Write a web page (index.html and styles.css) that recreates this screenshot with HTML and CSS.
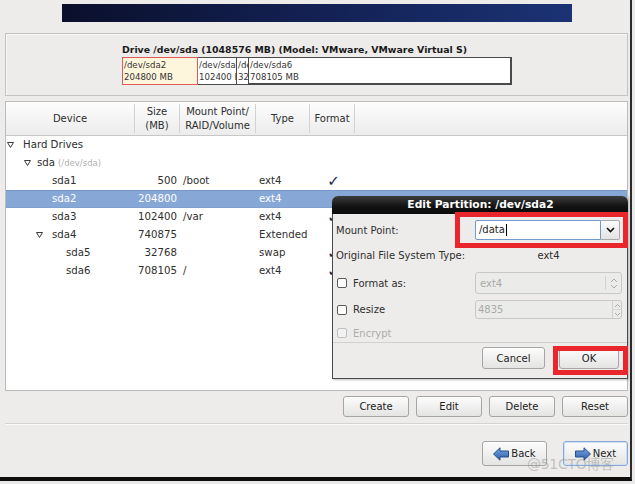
FILE: index.html
```html
<!DOCTYPE html>
<html>
<head>
<meta charset="utf-8">
<link rel="stylesheet" href="styles.css">
</head>
<body>
<div class="window">
  <div class="banner"></div>

  <section class="drive">
    <div class="drive-inner">
      <div class="drive-title">Drive /dev/sda (1048576 MB) (Model: VMware, VMware Virtual S)</div>
      <div class="drive-bar">
        <div class="seg seg-sel seg-a">/dev/sda2<br>204800 MB</div>
        <div class="seg seg-b">/dev/sda3<br>102400 MB</div>
        <div class="seg seg-c">/dev/sda5<br>32768 MB</div>
        <div class="seg seg-d">/dev/sda6<br>708105 MB</div>
      </div>
    </div>
  </section>

  <section class="tree">
    <div class="thead">
      <div class="th">Device</div>
      <div class="th th2">Size<br>(MB)</div>
      <div class="th th2">Mount Point/<br>RAID/Volume</div>
      <div class="th">Type</div>
      <div class="th">Format</div>
      <div class="th th-fill"></div>
    </div>

    <div class="row">
      <div class="cell dev d-hd"><span class="exp exp-hd"><svg width="7" height="6" viewBox="0 0 7 6"><polygon points="0.5,0.5 6.5,0.5 3.5,5.5" fill="#fff" stroke="#3a3a3a" stroke-width="1"/></svg></span>Hard Drives</div>
      <div class="cell"></div><div class="cell"></div><div class="cell"></div><div class="cell"></div><div class="cell"></div>
    </div>
    <div class="row">
      <div class="cell dev d-sda"><span class="exp exp-sda"><svg width="7" height="6" viewBox="0 0 7 6"><polygon points="0.5,0.5 6.5,0.5 3.5,5.5" fill="#fff" stroke="#3a3a3a" stroke-width="1"/></svg></span>sda <span class="dim">(/dev/sda)</span></div>
      <div class="cell"></div><div class="cell"></div><div class="cell"></div><div class="cell"></div><div class="cell"></div>
    </div>
    <div class="row">
      <div class="cell dev d-part">sda1</div>
      <div class="cell size">500</div>
      <div class="cell mnt">/boot</div>
      <div class="cell type">ext4</div>
      <div class="cell fmt">✓</div>
      <div class="cell"></div>
    </div>
    <div class="row row-sel">
      <div class="cell dev d-part">sda2</div>
      <div class="cell size">204800</div>
      <div class="cell mnt"></div>
      <div class="cell type">ext4</div>
      <div class="cell fmt"></div>
      <div class="cell"></div>
    </div>
    <div class="row">
      <div class="cell dev d-part">sda3</div>
      <div class="cell size">102400</div>
      <div class="cell mnt">/var</div>
      <div class="cell type">ext4</div>
      <div class="cell fmt">✓</div>
      <div class="cell"></div>
    </div>
    <div class="row">
      <div class="cell dev d-ext"><span class="exp exp-ext"><svg width="7" height="6" viewBox="0 0 7 6"><polygon points="0.5,0.5 6.5,0.5 3.5,5.5" fill="#fff" stroke="#3a3a3a" stroke-width="1"/></svg></span>sda4</div>
      <div class="cell size">740875</div>
      <div class="cell mnt"></div>
      <div class="cell type">Extended</div>
      <div class="cell fmt"></div>
      <div class="cell"></div>
    </div>
    <div class="row">
      <div class="cell dev d-log">sda5</div>
      <div class="cell size">32768</div>
      <div class="cell mnt"></div>
      <div class="cell type">swap</div>
      <div class="cell fmt">✓</div>
      <div class="cell"></div>
    </div>
    <div class="row">
      <div class="cell dev d-log">sda6</div>
      <div class="cell size">708105</div>
      <div class="cell mnt">/</div>
      <div class="cell type">ext4</div>
      <div class="cell fmt">✓</div>
      <div class="cell"></div>
    </div>
  </section>

  <div class="actions">
    <button class="btn">Create</button>
    <button class="btn">Edit</button>
    <button class="btn">Delete</button>
    <button class="btn">Reset</button>
  </div>

  <div class="sep"></div>

  <div class="nav">
    <button class="btn btn-nav"><svg class="arrow" width="16" height="14" viewBox="0 0 16 14"><defs><linearGradient id="ga" x1="0" y1="0" x2="0" y2="1"><stop offset="0" stop-color="#7aa6e0"/><stop offset="1" stop-color="#2c5ea8"/></linearGradient></defs><path d="M0.5 7 L7 0.8 L7 4 L15.5 4 L15.5 10 L7 10 L7 13.2 Z" fill="url(#ga)" stroke="#25508e" stroke-width="1" stroke-linejoin="round"/></svg>Back</button>
    <button class="btn btn-nav btn-focus"><svg class="arrow" width="16" height="14" viewBox="0 0 16 14"><defs><linearGradient id="gb" x1="0" y1="0" x2="0" y2="1"><stop offset="0" stop-color="#7aa6e0"/><stop offset="1" stop-color="#2c5ea8"/></linearGradient></defs><path d="M15.5 7 L9 0.8 L9 4 L0.5 4 L0.5 10 L9 10 L9 13.2 Z" fill="url(#gb)" stroke="#25508e" stroke-width="1" stroke-linejoin="round"/></svg>Next</button>
  </div>

  <div class="dialog">
    <div class="dlg-title">Edit Partition: /dev/sda2</div>
    <div class="dlg-body">
      <div class="frow r-mount">
        <span class="lbl">Mount Point:</span>
        <div class="combo-entry">
          <div class="entry-text">/data<span class="caret"></span></div>
          <div class="combo-btn"><svg width="9" height="6" viewBox="0 0 9 6"><polyline points="1,1 4.5,4.5 8,1" fill="none" stroke="#111" stroke-width="1.6"/></svg></div>
        </div>
      </div>
      <div class="frow r-orig">
        <span class="lbl">Original File System Type:</span>
        <span class="val">ext4</span>
      </div>
      <div class="frow r-fmt">
        <span class="lbl chk-lbl"><span class="chk"></span>Format as:</span>
        <div class="combo-dis">
          <span class="dis-text">ext4</span>
          <span class="combo-arrows"><svg width="8" height="13" viewBox="0 0 8 13"><polyline points="1,5 4,2 7,5" fill="none" stroke="#aaa" stroke-width="1"/><polyline points="1,8 4,11 7,8" fill="none" stroke="#aaa" stroke-width="1"/></svg></span>
        </div>
      </div>
      <div class="frow r-resize">
        <span class="lbl chk-lbl"><span class="chk"></span>Resize</span>
        <div class="spin">
          <span class="dis-text">4835</span>
          <span class="spin-btns">
            <span class="spin-b"><svg width="7" height="5" viewBox="0 0 7 5"><polyline points="1,4 3.5,1.5 6,4" fill="none" stroke="#aaa" stroke-width="1"/></svg></span>
            <span class="spin-b"><svg width="7" height="5" viewBox="0 0 7 5"><polyline points="1,1 3.5,3.5 6,1" fill="none" stroke="#aaa" stroke-width="1"/></svg></span>
          </span>
        </div>
      </div>
      <div class="frow r-enc">
        <span class="lbl chk-lbl lbl-dis"><span class="chk chk-dis"></span>Encrypt</span>
      </div>
      <div class="dlg-sep"></div>
      <div class="dlg-btns">
        <button class="btn btn-cancel">Cancel</button>
        <button class="btn btn-ok">OK</button>
      </div>
    </div>
  </div>

  <div class="mark mark-mount"></div>
  <div class="mark mark-ok"></div>
  <div class="watermark">@51CTO博客</div>
</div>
</body>
</html>
```

FILE: styles.css
```css
* { box-sizing: border-box; }

html, body {
  margin: 0;
  padding: 0;
}

body {
  width: 635px;
  height: 484px;
  overflow: hidden;
  background: #e9e9e9;
  font-family: "DejaVu Sans", sans-serif;
  font-size: 10px;
  color: #2e2e2e;
}

.window {
  position: relative;
  width: 632px;
  height: 481px;
  background: #edeceb;
  border-right: 2px solid #2b2b2b;
  border-bottom: 4px solid #0d0d0d;
  padding: 4px 2px 0 5px;
  display: flex;
  flex-direction: column;
}

.banner {
  margin-left: 57px;
  width: 510px;
  height: 18px;
  background: linear-gradient(90deg, #0a0f2b 0%, #121f50 45%, #1b3274 100%);
  flex: none;
}

/* drive box */
.drive {
  margin-top: 11px;
  height: 63px;
  border: 1px solid #c3c3c1;
  box-shadow: inset 1px 1px 0 #f8f8f8;
  display: flex;
  justify-content: center;
  flex: none;
}

.drive-inner {
  width: 390px;
  padding-top: 9px;
  margin-left: 1px;
}

.drive-title {
  font-weight: bold;
  font-size: 9.4px;
  line-height: 13px;
  color: #1a1a1a;
  white-space: nowrap;
  margin-bottom: 1px;
}

.drive-bar {
  display: flex;
  height: 28px;
}

.seg {
  height: 28px;
  border: 1px solid #4a4a4a;
  border-left: none;
  background: #fff;
  font-size: 8.6px;
  line-height: 12px;
  padding: 1px 0 0 1px;
  overflow: hidden;
  white-space: nowrap;
  color: #333;
}

.seg-a { width: 76px; }
.seg-b { width: 39px; }
.seg-c { width: 12px; }
.seg-d { width: 263px; border-right: 2px solid #4a4a4a; border-bottom: 2px solid #4a4a4a; }

.seg-sel {
  background: #fdf6dd;
  border: 1px solid #e05a5a;
}

/* tree */
.tree {
  margin-top: 5px;
  height: 290px;
  background: #fff;
  border: 1px solid #bcbcbc;
  flex: none;
}

.thead, .row {
  display: grid;
  grid-template-columns: 129px 45px 76px 54px 45px 1fr;
}

.thead {
  height: 34px;
  background: linear-gradient(#fdfdfd, #ececec);
  border-bottom: 1px solid #c7c7c7;
}

.th {
  display: flex;
  align-items: center;
  justify-content: center;
  text-align: center;
  line-height: 14px;
  color: #2e2e2e;
  border-right: 1px solid #d2d2d2;
  margin: 2px 0;
}

.th2 { padding-top: 1px; }

.th-fill { border-right: none; }

.row {
  height: 18px;
  line-height: 18px;
  white-space: nowrap;
  font-size: 10.2px;
}

.row-sel {
  background: #87a7d7;
  color: #fff;
  box-shadow: inset 0 1px 0 #7797c9, inset 0 -1px 0 #7f9fd0;
}

.cell { overflow: hidden; }

.dev { display: flex; align-items: center; }

.exp {
  display: inline-flex;
  align-items: center;
  height: 18px;
  flex: none;
}

.exp svg { display: block; }

.d-hd { padding-left: 1px; }
.exp-hd { width: 16px; }

.d-sda { padding-left: 18px; }
.exp-sda { width: 13px; }

.d-ext { padding-left: 30px; }
.exp-ext { width: 16px; }

.d-part { padding-left: 46px; }
.d-log { padding-left: 60px; }

.dim {
  font-size: 8.5px;
  color: #b0b0b0;
  margin-left: 3px;
}

.size { text-align: right; padding-right: 3px; }
.mnt { padding-left: 3px; }
.type { padding-left: 3px; }

.fmt {
  text-align: center;
  font-size: 15px;
  color: #1d1d4c;
  padding-left: 2px;
}

/* action buttons */
.btn {
  font-family: "DejaVu Sans", sans-serif;
  font-size: 10px;
  color: #222;
  background: linear-gradient(#fcfcfc, #e4e4e3);
  border: 1px solid #a5a5a5;
  border-radius: 3px;
  box-shadow: inset 0 1px 0 #fff;
  padding: 0;
  margin: 0;
  display: inline-flex;
  align-items: center;
  justify-content: center;
}

.actions {
  margin-top: 5px;
  height: 21px;
  display: flex;
  justify-content: flex-end;
  gap: 7px;
  flex: none;
}

.actions .btn { width: 66px; height: 21px; }

.sep {
  margin-top: 6px;
  height: 2px;
  border-top: 1px solid #d3d3d1;
  border-bottom: 1px solid #fafafa;
  flex: none;
}

.nav {
  margin-top: 16px;
  height: 25px;
  display: flex;
  justify-content: flex-end;
  gap: 16px;
  flex: none;
}

.btn-nav {
  width: 65px;
  height: 25px;
  gap: 2px;
}

.btn-focus {
  border-color: #86a9d8;
  box-shadow: inset 0 0 0 1px #cfe0f5;
}

.arrow { display: block; }

/* dialog */
.dialog {
  position: absolute;
  left: 332px;
  top: 196px;
  width: 296px;
  height: 183px;
  display: flex;
  flex-direction: column;
  box-shadow: 1px 1px 2px rgba(0,0,0,0.25);
}

.dlg-title {
  height: 18px;
  line-height: 18px;
  background: linear-gradient(#3c3c3c, #111 60%, #0c0c0c);
  border-radius: 6px 6px 0 0;
  color: #fff;
  font-weight: bold;
  font-size: 10.7px;
  text-align: center;
  padding-left: 1px;
}

.dlg-body {
  flex: 1;
  background: #edeceb;
  border: 1px solid #4a4a4a;
  border-top: none;
  padding: 6px 0 0 3px;
  display: flex;
  flex-direction: column;
}

.frow {
  display: grid;
  grid-template-columns: 139px 147px;
  align-items: center;
}

.r-mount { height: 20px; }
.r-orig { height: 16px; margin-top: 7px; }
.r-fmt { height: 22px; margin-top: 9px; }
.r-resize { height: 19px; margin-top: 6px; }
.r-enc { height: 16px; margin-top: 6px; }

.lbl { color: #2e2e2e; white-space: nowrap; }

.chk-lbl { display: flex; align-items: center; gap: 6px; padding-left: 1px; }

.chk {
  width: 10px;
  height: 10px;
  border: 1px solid #5a5a5a;
  border-radius: 2px;
  background: #fff;
  flex: none;
}

.chk-dis { border-color: #c0c0c0; background: #f2f2f2; }
.lbl-dis { color: #acacac; }

.val { text-align: center; }

.combo-entry {
  width: 145px;
  height: 20px;
  display: flex;
}

.entry-text {
  flex: 1;
  background: #fff;
  border: 1px solid #7099cd;
  border-radius: 2px 0 0 2px;
  padding-left: 3px;
  line-height: 18px;
  color: #222;
  display: flex;
  align-items: center;
}

.caret {
  display: inline-block;
  width: 1px;
  height: 12px;
  background: #000;
  margin-left: 1px;
}

.combo-btn {
  width: 19px;
  background: linear-gradient(#fbfbfb, #e3e3e3);
  border: 1px solid #a9a9a9;
  border-left: none;
  border-radius: 0 2px 2px 0;
  display: flex;
  align-items: center;
  justify-content: center;
}

.combo-dis, .spin {
  width: 147px;
  display: flex;
  align-items: stretch;
  background: #ebebea;
  border: 1px solid #c8c8c6;
  border-radius: 3px;
}

.combo-dis { height: 22px; }
.spin { height: 19px; }

.dis-text {
  flex: 1;
  color: #a9a9a9;
  padding-left: 4px;
  display: flex;
  align-items: center;
}

.spin .dis-text { padding-left: 2px; }

.combo-arrows {
  width: 16px;
  border-left: 1px solid #d2d2d0;
  margin: 3px 0;
  display: flex;
  align-items: center;
  justify-content: center;
}

.spin-btns {
  width: 9px;
  border-left: 1px solid #cfcfcd;
  display: flex;
  flex-direction: column;
}

.spin-b {
  flex: 1;
  display: flex;
  align-items: center;
  justify-content: center;
}

.spin-b + .spin-b { border-top: 1px solid #d8d8d6; }

.dlg-sep {
  margin-top: 1px;
  margin-left: -3px;
  height: 1px;
  background: #d0d0ce;
}

.dlg-btns {
  margin-top: 4px;
  display: flex;
  justify-content: flex-end;
  align-items: center;
  gap: 14px;
  padding-right: 8px;
}

.btn-cancel { width: 63px; height: 22px; }
.btn-ok { width: 60px; height: 21px; }

/* annotations */
.mark {
  position: absolute;
  border: 5px solid #e8262b;
}

.mark-mount { left: 455px; top: 212px; width: 173px; height: 36px; }
.mark-ok { left: 553px; top: 346px; width: 75px; height: 29px; }

.watermark {
  position: absolute;
  left: 527px;
  top: 453px;
  font-family: "DejaVu Sans", "Noto Sans CJK SC", sans-serif;
  font-size: 14px;
  color: rgba(150, 150, 150, 0.5);
  white-space: nowrap;
  letter-spacing: -0.3px;
}
```
